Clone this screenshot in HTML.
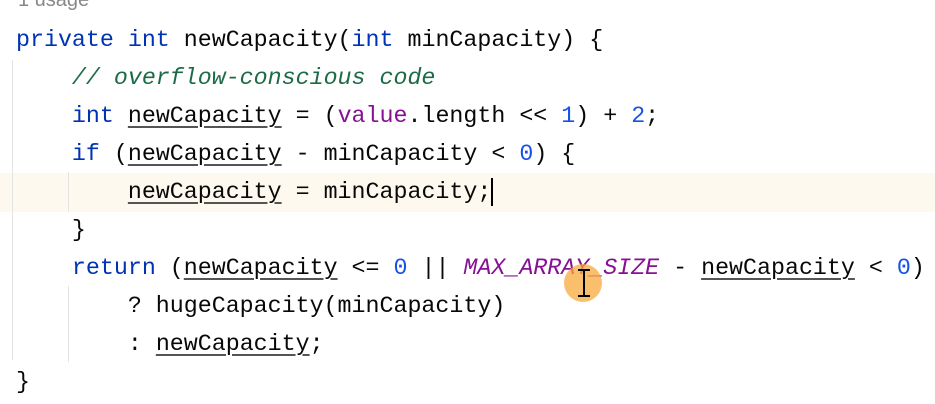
<!DOCTYPE html>
<html><head><style>
body{margin:0;width:935px;height:404px;background:#fff;overflow:hidden;position:relative;font-family:"Liberation Mono",monospace;}
.l{position:absolute;left:16px;height:38px;line-height:38px;font-size:23.3px;color:#080808;white-space:pre;}
.k{color:#0033b3}.c{color:#1d6b46;font-style:italic}.p{color:#871094}.n{color:#1750eb}.s{color:#871094;font-style:italic}
u{text-decoration:underline;text-decoration-color:#555;text-underline-offset:4px;text-decoration-thickness:1.5px}
.g{position:absolute;width:1px;background:#e4e4e4}
</style></head><body>
<div style="position:absolute;left:0;top:173px;width:935px;height:39px;background:#fdf9ee"></div>
<div class="g" style="left:12px;top:60px;height:300px"></div>
<div class="g" style="left:68px;top:172px;height:40px"></div>
<div class="g" style="left:68px;top:286px;height:76px"></div>
<div style="position:absolute;left:18px;top:-11px;font:20px 'Liberation Sans',sans-serif;color:#888">1 usage</div>
<div class="l" style="top:21px"><span class="k">private int</span> newCapacity(<span class="k">int</span> minCapacity) {</div>
<div class="l" style="top:59px">    <span class="c">// overflow-conscious code</span></div>
<div class="l" style="top:97px">    <span class="k">int</span> <u>newCapacity</u> = (<span class="p">value</span>.length &lt;&lt; <span class="n">1</span>) + <span class="n">2</span>;</div>
<div class="l" style="top:135px">    <span class="k">if</span> (<u>newCapacity</u> - minCapacity &lt; <span class="n">0</span>) {</div>
<div class="l" style="top:173px">        <u>newCapacity</u> = minCapacity;</div>
<div style="position:absolute;left:491px;top:178px;width:2px;height:28px;background:#000"></div>
<div class="l" style="top:211px">    }</div>
<div class="l" style="top:249px">    <span class="k">return</span> (<u>newCapacity</u> &lt;= <span class="n">0</span> || <span class="s">MAX_ARRAY_SIZE</span> - <u>newCapacity</u> &lt; <span class="n">0</span>)</div>
<div class="l" style="top:287px">        ? hugeCapacity(minCapacity)</div>
<div class="l" style="top:325px">        : <u>newCapacity</u>;</div>
<div class="l" style="top:363px">}</div>
<div style="position:absolute;left:564px;top:264px;width:38px;height:38px;border-radius:50%;background:rgba(248,170,60,0.75)"></div>
<div style="position:absolute;left:583px;top:270px;width:2px;height:26px;background:#000"></div>
<div style="position:absolute;left:578px;top:269px;width:12px;height:2px;background:#000"></div>
<div style="position:absolute;left:578px;top:295px;width:12px;height:2px;background:#000"></div>
</body></html>
